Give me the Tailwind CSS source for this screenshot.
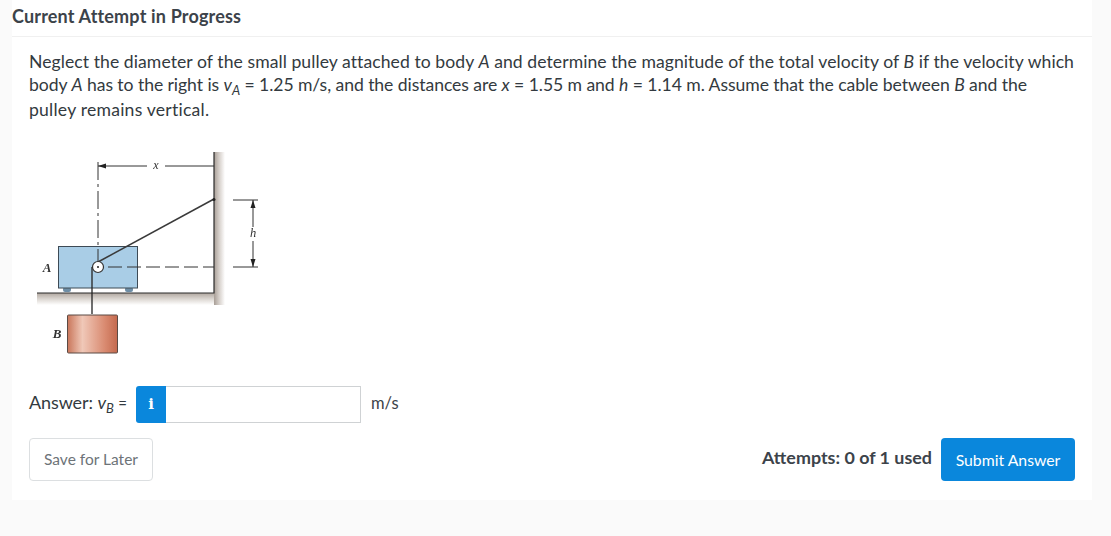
<!DOCTYPE html>
<html>
<head>
<meta charset="utf-8">
<script src="https://cdn.jsdelivr.net/npm/@tailwindcss/browser@4"></script>
</head>
<body class="m-0 h-[536px] w-[1111px] overflow-hidden bg-[#fafafa] font-['Lato',sans-serif] text-[#333a40]">
<main class="ml-3 h-[500px] w-[1080px] bg-white">
  <h1 class="h-[37px] border-b border-[#f0f0f0] pt-[5px] text-[18px] font-bold leading-[22px] tracking-[0.17px] text-[#3c434a]">Current Attempt in Progress</h1>
  <section class="px-[17px] pt-3">
    <div class="text-[17.6px]">
      <p class="h-[23px] whitespace-nowrap leading-[25px] tracking-[0.058px]">Neglect the diameter of the small pulley attached to body <i>A</i> and determine the magnitude of the total velocity of <i>B</i> if the velocity which</p>
      <p class="h-[25px] whitespace-nowrap leading-[25px] tracking-[-0.07px]">body <i>A</i> has to the right is <i>v</i><span class="relative top-[4px] text-[13px] italic leading-none">A</span> = 1.25 m/s, and the distances are <i>x</i> = 1.55 m and <i>h</i> = 1.14 m. Assume that the cable between <i>B</i> and the</p>
      <p class="h-[25px] whitespace-nowrap leading-[25px] tracking-[0.22px]">pulley remains vertical.</p>
    </div>
    <svg class="-ml-[9px] mt-[18px] block blur-[0.4px]" width="260" height="225" viewBox="20 140 260 225" xmlns="http://www.w3.org/2000/svg">
      <defs>
        <linearGradient id="sr" x1="0" x2="1" y1="0" y2="0"><stop offset="0" stop-color="#a89e96"/><stop offset=".5" stop-color="#d8d2cd"/><stop offset="1" stop-color="#fff"/></linearGradient>
        <linearGradient id="sb" x1="0" x2="0" y1="0" y2="1"><stop offset="0" stop-color="#b0a79f"/><stop offset=".5" stop-color="#dcd7d2"/><stop offset="1" stop-color="#fff"/></linearGradient>
        <linearGradient id="bb" x1="0" x2="1" y1="0" y2="0"><stop offset="0" stop-color="#c9765a"/><stop offset=".3" stop-color="#f0c8b8"/><stop offset=".75" stop-color="#d98a70"/><stop offset="1" stop-color="#c4694e"/></linearGradient>
      </defs>
      <rect x="37" y="293" width="188" height="12" fill="url(#sb)"/>
      <rect x="214" y="152" width="11" height="153" fill="url(#sr)"/>
      <rect x="63" y="287" width="8" height="5" rx="2" fill="#6e8ea6"/>
      <rect x="125" y="287" width="8" height="5" rx="2" fill="#6e8ea6"/>
      <rect x="58.500" y="246.500" width="79" height="41.500" fill="#a9cde6" stroke="#3d4a55"/>
      <path d="M37 293H214V152" fill="none" stroke="#2c2c2c" stroke-width="1.200"/>
      <path d="M98 166H214" stroke="#333" stroke-width="1"/>
      <path d="M98 166l8 -2.500v5z" fill="#222"/>
      <rect x="147" y="160" width="18" height="12" fill="#fff"/>
      <path d="M98 162V262" stroke="#333" stroke-width="1" stroke-dasharray="18 4 3 4"/>
      <path d="M108 267H214" stroke="#333" stroke-width="1" stroke-dasharray="14 5"/>
      <path d="M98 262L214 199" stroke="#3a3a3a" stroke-width="1.500"/>
      <circle cx="214" cy="199.500" r="1.500" fill="#222"/>
      <path d="M92 267V314" stroke="#222" stroke-width="1.300"/>
      <circle cx="98" cy="267" r="5.500" fill="#fff" stroke="#333" stroke-width="1.200"/>
      <circle cx="98" cy="267" r="1" fill="#222"/>
      <path d="M233 200H258M233 267H258M253 200V227M253 241V267" stroke="#333" stroke-width="1"/>
      <path d="M253 200l-2.500 8h5zM253 267l-2.500 -8h5z" fill="#222"/>
      <rect x="67.500" y="315" width="50" height="38" rx="1" fill="url(#bb)" stroke="#5a4a44"/>
      <g font-family="'Liberation Serif',serif" font-style="italic" fill="#333">
        <text x="156" y="169" font-size="12" text-anchor="middle">x</text>
        <text x="253" y="237" font-size="12.500" text-anchor="middle">h</text>
        <text x="47" y="272" font-size="13" font-weight="bold" text-anchor="middle">A</text>
        <text x="57" y="338" font-size="13" font-weight="bold" text-anchor="middle">B</text>
      </g>
    </svg>
    <div class="mt-[21px] flex h-[37px] items-center">
      <span class="relative -top-[2px] w-[107px] whitespace-nowrap text-[18px] leading-[30px] tracking-[-0.1px]">Answer: <i>v</i><span class="relative top-[4px] text-[13px] italic leading-none">B</span> <span class="text-[15px]">=</span></span>
      <span class="flex h-[37px] w-[30px] items-center justify-center rounded-l-[3px] bg-[#0a87dc]">
        <span class="font-['DejaVu_Serif',serif] text-[15px] font-bold leading-none text-white">i</span>
      </span>
      <span class="h-[37px] w-[195px] border border-l-0 border-[#cfd2d4] bg-white"></span>
      <span class="relative -top-[1px] ml-[10px] text-[16.500px] text-[#3c434a]">m/s</span>
    </div>
    <div class="mt-[15px] flex items-start justify-between">
      <button class="h-[43px] w-[124px] rounded-[4px] border border-[#dcdfe1] bg-white text-[15.500px] text-[#6d7378]">Save for Later</button>
      <div class="flex items-start">
        <span class="mr-[9px] mt-[7px] text-[17.900px] font-bold leading-[24px] text-[#3c434a]">Attempts: 0 of 1 used</span>
        <button class="h-[43px] w-[134px] rounded-[4px] bg-[#0a87dc] text-[15.800px] font-normal text-white">Submit Answer</button>
      </div>
    </div>
  </section>
</main>
</body>
</html>
